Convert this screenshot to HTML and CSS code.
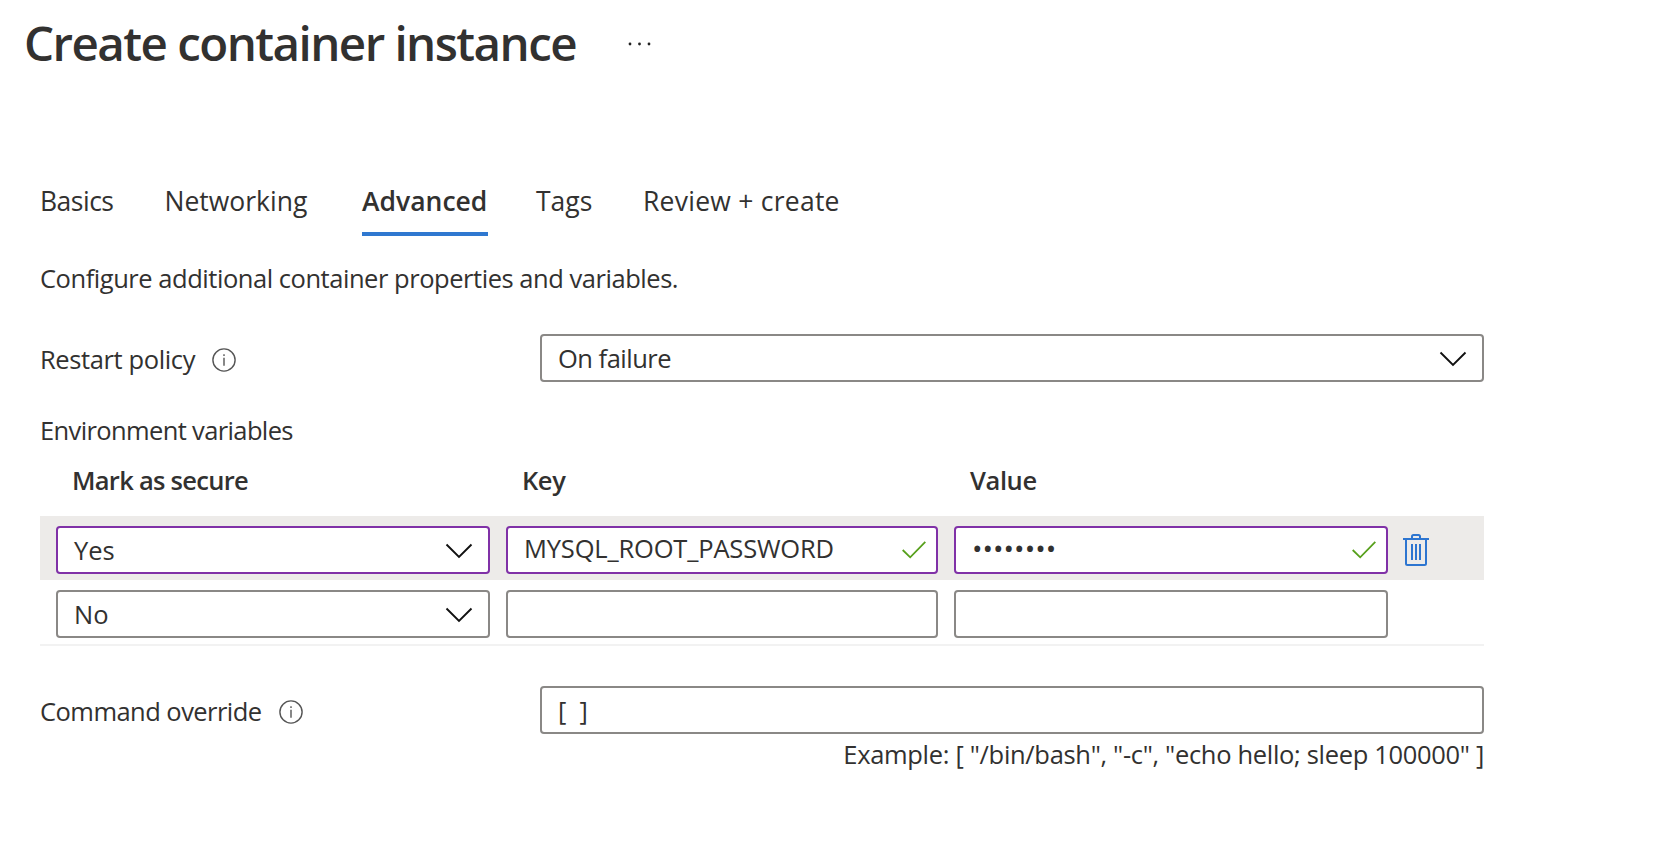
FILE: index.html
```html
<!DOCTYPE html>
<html lang="en">
<head>
<meta charset="utf-8">
<title>Create container instance</title>
<link rel="stylesheet" href="styles.css">
</head>
<body>
<svg class="defs" width="0" height="0">
  <symbol id="chevron" viewBox="0 0 28 16"><path d="M1.5 1.5 14 14 26.5 1.5" fill="none" stroke="#111" stroke-width="1.9"/></symbol>
  <symbol id="check" viewBox="0 0 24 18"><path d="M.7 9 8.2 16.3 23.3.9" fill="none" stroke="#57a01c" stroke-width="1.8"/></symbol>
  <symbol id="info" viewBox="0 0 24 24"><circle cx="12" cy="12" r="11.1" fill="none" stroke="#555" stroke-width="1.4"/><path d="M12 9.8V17.8M12 6.3V8" stroke="#555" stroke-width="1.4"/></symbol>
</svg>
<header class="header">
  <h1 class="title">Create container instance</h1>
  <svg class="more" width="24" height="4" viewBox="0 0 24 4"><circle cx="2" cy="2" r="1.4"/><circle cx="11.5" cy="2" r="1.4"/><circle cx="21" cy="2" r="1.4"/></svg>
</header>
<main class="content">
  <nav class="tabs">
    <span class="tab basics">Basics</span>
    <span class="tab networking">Networking</span>
    <span class="tab advanced">Advanced</span>
    <span class="tab tags">Tags</span>
    <span class="tab review">Review + create</span>
  </nav>
  <p class="description">Configure additional container properties and variables.</p>
  <div class="field-row restart">
    <div class="label"><span class="restart-text">Restart policy</span><svg class="info" width="24" height="24"><use href="#info"/></svg></div>
    <div class="field"><span class="failure-text">On failure</span><svg class="chevron" width="28" height="16"><use href="#chevron"/></svg></div>
  </div>
  <div class="section-label">Environment variables</div>
  <div class="grid-row head">
    <span class="mark">Mark as secure</span><span class="key">Key</span><span class="value">Value</span>
  </div>
  <div class="grid-row selected">
    <div class="field"><span class="yes">Yes</span><svg class="chevron" width="28" height="16"><use href="#chevron"/></svg></div>
    <div class="field raised"><span class="mysql">MYSQL_ROOT_PASSWORD</span><svg class="check" width="24" height="18"><use href="#check"/></svg></div>
    <div class="field raised"><span class="password">••••••••</span><svg class="check" width="24" height="18"><use href="#check"/></svg></div>
    <svg class="trash" width="26" height="32" viewBox="0 0 26 32" fill="none" stroke="#2d75d0" stroke-width="2"><path d="M0 5H26M9 5V2.5Q9 1 10.500 1H15.500Q17 1 17 2.500V5M3 5V29.500Q3 31 4.500 31H21.500Q23 31 23 29.500V5M9 10V26M13 10V26M17 10V26"/></svg>
  </div>
  <div class="grid-row blank">
    <div class="field"><span class="no">No</span><svg class="chevron" width="28" height="16"><use href="#chevron"/></svg></div>
    <div class="field"></div>
    <div class="field"></div>
  </div>
  <div class="field-row command">
    <div class="label"><span class="command-text">Command override</span><svg class="info" width="24" height="24"><use href="#info"/></svg></div>
    <div class="field"><span class="brackets">[ ]</span></div>
  </div>
  <div class="example"><span class="example-text">Example: [ "/bin/bash", "-c", "echo hello; sleep 100000" ]</span></div>
</main>
</body>
</html>
```
FILE: styles.css
```css
* { box-sizing: border-box; }
body { margin: 0; background: #fff; color: #323130; font: 25.5px/32px "Open Sans", "Noto Sans", sans-serif; white-space: nowrap; overflow: hidden; }
svg { display: block; flex: none; }
.defs { position: absolute; }
.header { display: flex; padding: 13px 0 0 24px; height: 96px; }
.title { margin: 0; width: 604px; font-size: 47.5px; line-height: 60px; font-weight: 600; letter-spacing: -1.55px; }
.more { margin-top: 29px; fill: #222; }
.content { width: 1444px; margin-left: 40px; }
.tabs { display: flex; height: 140px; padding-top: 89px; font-size: 26.5px; }
.tab { height: 51px; }
.basics { width: 124.5px; letter-spacing: -.5px; }
.networking { width: 197.5px; }
.advanced { width: 126px; margin-right: 48px; font-weight: 600; border-bottom: 4px solid #2f78d0; }
.tags { width: 107px; }
.review { letter-spacing: .25px; }
.description { margin: 26px 0 40px; height: 32px; letter-spacing: -.46px; }
.field-row { display: grid; grid-template-columns: 500px 944px; height: 48px; }
.label { display: flex; gap: 17px; padding-top: 9px; }
.info { margin-top: 5px; }
.restart-text { letter-spacing: -.38px; }
.failure-text { letter-spacing: -.5px; }
.command-text { letter-spacing: -.54px; }
.brackets { word-spacing: 6.5px; }
.example-text { letter-spacing: -.32px; }
.field { height: 48px; border: 2px solid #8a8886; border-radius: 4px; background: #fff; display: flex; justify-content: space-between; padding: 6px 0 0 16px; }
.chevron { margin: 9px 15px 0 0; }
.section-label { margin-top: 32px; height: 32px; letter-spacing: -.63px; }
.grid-row { display: grid; grid-template-columns: 434px 432px 434px 26px; column-gap: 16px; padding-left: 16px; }
.head { font-weight: 600; padding-top: 18px; height: 70px; }
.head span { padding-left: 16px; }
.mark { letter-spacing: -.72px; }
.key, .value { letter-spacing: -.4px; }
.mysql { letter-spacing: -.17px; }
.password { font-size: 28px; }
.selected { height: 64px; padding-top: 10px; background: #edebe9; }
.selected .field { border-color: #8031a7; }
.selected .raised { padding-top: 4px; }
.check { margin: 9px 10px 0 0; }
.trash { margin: 8px 0 0 -1px; }
.blank { height: 66px; padding-top: 10px; border-bottom: 2px solid #f2f2f2; }
.command { margin-top: 40px; }
.example { display: flex; justify-content: flex-end; padding-top: 4px; }
```
